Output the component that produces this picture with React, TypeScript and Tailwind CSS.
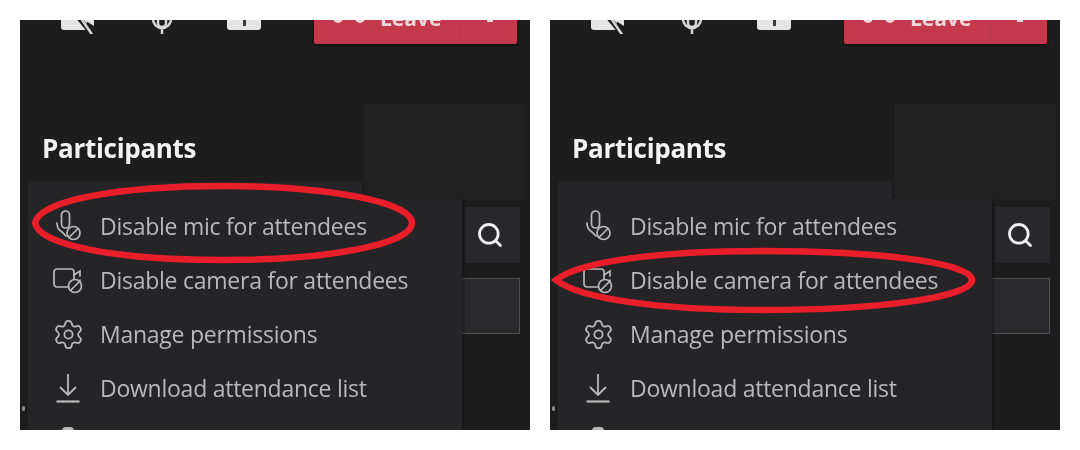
import { Search, Settings } from 'lucide-react';

// mic with the small "blocked" circle, as in the Teams menu
function MicBlocked() {
  return (
    <svg width="28" height="32" viewBox="0 0 28 32" fill="none" stroke="currentColor" strokeWidth="1.7">
      <rect x="7.500" y="1" width="8" height="17" rx="4" />
      <path d="M3 13c0 4 1.500 7 5 9l4 4" strokeLinecap="round" />
      <circle cx="19.500" cy="23" r="6.500" fill="#252427" />
      <path d="M15 27.500l9-9" />
    </svg>
  );
}

function CameraBlocked() {
  return (
    <svg width="30" height="28" viewBox="0 0 30 28" fill="none" stroke="currentColor" strokeWidth="1.7">
      <rect x="1" y="3" width="20" height="18" rx="3" />
      <path d="M21 9l6-4v5M27 14v1" strokeLinecap="round" />
      <circle cx="22" cy="20" r="6.500" fill="#252427" />
      <path d="M17.500 24.500l9-9" />
    </svg>
  );
}

function DownloadArrow() {
  return (
    <svg width="26" height="30" viewBox="0 0 26 30" fill="none" stroke="currentColor" strokeWidth="1.8">
      <path d="M13 1v21M5 14l8 8 8-8" />
      <path d="M1.500 28.500h23" strokeWidth="2.200" />
    </svg>
  );
}

function CameraOffSolid() {
  return (
    <svg width="38" height="36" viewBox="0 0 38 36" className="mb-[-4px]">
      <rect x="1" y="6" width="26" height="22" rx="3" fill="#e4e4e4" />
      <path d="M26 14l8-5v15l-8-5z" fill="#e4e4e4" />
      <path d="M8 3l26 31" stroke="#1d1d1e" strokeWidth="5" />
      <path d="M12 3l21 31" stroke="#d8d8d8" strokeWidth="2.500" strokeLinecap="round" />
    </svg>
  );
}

function MicRing() {
  return (
    <svg width="36" height="36" viewBox="0 0 36 36" fill="none" stroke="#d8d8d8" strokeWidth="2.500" className="mb-[-13px]">
      <rect x="14" y="2" width="8" height="14" rx="4" />
      <path d="M9 8a9 9 0 0018 0M18 17v7" strokeLinecap="round" />
    </svg>
  );
}

function ShareTray() {
  return (
    <svg width="36" height="36" viewBox="0 0 36 36" className="mb-[-2px]">
      <rect x="1" y="0" width="34" height="30" rx="3" fill="#e4e4e4" />
      <rect x="17" y="20" width="3" height="6" fill="#3a3a3a" />
    </svg>
  );
}

const ITEMS = [
  { label: 'Disable mic for attendees', icon: <MicBlocked /> },
  { label: 'Disable camera for attendees', icon: <CameraBlocked /> },
  { label: 'Manage permissions', icon: <Settings size={33} strokeWidth={1.3} /> },
  { label: 'Download attendance list', icon: <DownloadArrow /> },
];

function ParticipantsPanel({ circled }: { circled: 'mic' | 'camera' }) {
  return (
    <div className="relative w-[510px] h-[410px] overflow-hidden bg-[#1d1d1e] font-['Open_Sans',sans-serif]">
      <div className="relative h-full blur-[0.7px]">
        {/* top toolbar, cut off by the crop */}
        <div className="flex items-end h-[24px] pl-[40px] pr-[13px]">
          <div className="flex items-end gap-[46px] h-[14px] self-start overflow-hidden">
            <CameraOffSolid />
            <MicRing />
            <ShareTray />
          </div>
          <div className="flex items-end ml-auto w-[203px] h-[24px] overflow-hidden bg-[#c43a4c] rounded-b-[2px] text-[#f0d8da] shadow-[0_1px_3px_rgba(0,0,0,0.6)]">
            <div className="flex items-start w-[147px] h-[24px] border-r border-[#b93648]">
              <span className="w-[10px] h-[8px] mt-[-5px] ml-[19px] rounded-b-full bg-current" />
              <span className="w-[10px] h-[8px] mt-[-5px] ml-[12px] rounded-b-full bg-current" />
              <span className="ml-[15px] mt-[-17px] text-[21px] font-bold leading-[30px]">Leave</span>
            </div>
            <span className="w-[6px] h-[2px] ml-[26px] mb-[22px] bg-current" />
          </div>
        </div>

        {/* header row */}
        <div className="flex justify-between h-[156px] pl-[22px] pr-[5px] pt-[60px]">
          <h2 className="mt-[20px] text-[26px] font-bold leading-[48px] tracking-[-0.3px] text-[#f2f2f2]">Participants</h2>
          <div className="w-[161px] h-[96px] bg-[#212122]" />
        </div>

        {/* search + input behind the menu */}
        <div className="flex flex-col items-end pr-[10px] pt-[7px] gap-[15px]">
          <div className="flex items-center justify-center w-[55px] h-[56px] pr-[5px] bg-[#28282a] text-[#f0f0f0]">
            <Search size={28} strokeWidth={2.4} />
          </div>
          <div className="w-[100px] h-[56px] bg-[#2a2a2c] border border-[#505051]" />
        </div>

        {/* dropdown menu, lies over the panel */}
        <div className="absolute left-[8px] top-[162px] w-[334px] h-[20px] bg-[#252427]" />
        <ul className="absolute left-[8px] top-[179px] w-[434px] h-[240px] bg-[#252427] shadow-[2px_0_2px_rgba(0,0,0,0.25)] text-[#b9b9ba]">
          {ITEMS.map((item) => (
            <li key={item.label} className="flex items-center h-[54px]">
              <span className="flex justify-center items-center w-[72px] pl-[8px]">{item.icon}</span>
              <span className="text-[23px] font-medium leading-[54px] tracking-[-0.25px]">{item.label}</span>
            </li>
          ))}
          <li className="flex justify-center w-[72px] pl-[8px] pt-[12px]">
            <span className="w-[12px] h-[4px] rounded-t-full bg-[#b9b9ba]" />
          </li>
        </ul>
        <span className="absolute left-[2px] top-[386px] w-[3px] h-[5px] rounded-full bg-[#8a8a8a]" />
      </div>

      {/* red hand-drawn highlight */}
      {circled === 'mic' ? (
        <svg className="absolute left-[10px] top-[160px]" width="390" height="88" fill="none">
          <path d="M5 43C9 20 90 6 194 6C298 6 382 22 382 43C382 64 298 80 194 80C90 80 9 66 5 43Z" stroke="#e81f2a" strokeWidth="6.500" />
        </svg>
      ) : (
        <svg className="absolute left-0 top-[225px]" width="430" height="72" fill="none">
          <path d="M6 35C30 16 110 6 213 6C330 6 422 18 422 35C422 52 330 65 213 65C110 65 30 54 6 35Z" stroke="#e81f2a" strokeWidth="6.500" />
        </svg>
      )}
    </div>
  );
}

export default function App() {
  return (
    <div className="flex gap-[20px] w-[1080px] h-[450px] p-[20px] bg-white">
      <ParticipantsPanel circled="mic" />
      <ParticipantsPanel circled="camera" />
    </div>
  );
}
